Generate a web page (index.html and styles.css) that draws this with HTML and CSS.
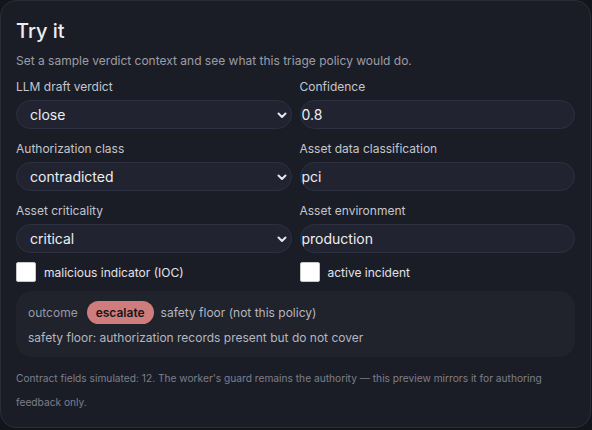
FILE: index.html
```html
<!DOCTYPE html>
<html lang="en">
<head>
    <meta charset="UTF-8">
    <meta name="viewport" content="width=device-width, initial-scale=1.0">
    <title>Try it</title>
    <link rel="stylesheet" href="styles.css">
</head>
<body>
    <section class="try-card">
        <h2>Try it</h2>
        <p class="intro">Set a sample verdict context and see what this triage policy would do.</p>

        <div class="fields">
            <div class="field">
                <label>LLM draft verdict</label>
                <div class="select-box">
                    <span>close</span>
                    <svg class="chevron" viewBox="0 0 12 12" width="12" height="12"><path d="M2.5 4.5 L6 8 L9.5 4.5" fill="none" stroke="#e6e7ec" stroke-width="2" stroke-linecap="round" stroke-linejoin="round"/></svg>
                </div>
            </div>
            <div class="field">
                <label>Confidence</label>
                <input class="text-input" type="text" value="0.8">
            </div>

            <div class="field">
                <label>Authorization class</label>
                <div class="select-box">
                    <span>contradicted</span>
                    <svg class="chevron" viewBox="0 0 12 12" width="12" height="12"><path d="M2.5 4.5 L6 8 L9.5 4.5" fill="none" stroke="#e6e7ec" stroke-width="2" stroke-linecap="round" stroke-linejoin="round"/></svg>
                </div>
            </div>
            <div class="field">
                <label>Asset data classification</label>
                <input class="text-input" type="text" value="pci">
            </div>

            <div class="field">
                <label>Asset criticality</label>
                <div class="select-box">
                    <span>critical</span>
                    <svg class="chevron" viewBox="0 0 12 12" width="12" height="12"><path d="M2.5 4.5 L6 8 L9.5 4.5" fill="none" stroke="#e6e7ec" stroke-width="2" stroke-linecap="round" stroke-linejoin="round"/></svg>
                </div>
            </div>
            <div class="field">
                <label>Asset environment</label>
                <input class="text-input" type="text" value="production">
            </div>

            <label class="check"><input type="checkbox"> malicious indicator (IOC)</label>
            <label class="check"><input type="checkbox"> active incident</label>
        </div>

        <div class="outcome">
            <div class="outcome-line">
                <span class="outcome-label">outcome</span>
                <span class="badge">escalate</span>
                <span>safety floor (not this policy)</span>
            </div>
            <div class="outcome-line">safety floor: authorization records present but do not cover</div>
        </div>

        <p class="note">Contract fields simulated: 12. The worker's guard remains the authority — this preview mirrors it for authoring feedback only.</p>
    </section>
</body>
</html>
```

FILE: styles.css
```css
* {
    margin: 0;
    padding: 0;
    box-sizing: border-box;
    font-family: Inter, "Noto Sans", sans-serif;
}

body {
    background-color: #14151b;
    width: 592px;
    height: 430px;
    overflow: hidden;
}

.try-card {
    width: 591px;
    height: 428px;
    background-color: #1b1d26;
    border: 1px solid #2a2d38;
    border-radius: 16px;
    padding: 16px 15px 14px 15px;
}

.try-card h2 {
    font-size: 20px;
    font-weight: 500;
    line-height: 28px;
    color: #eceef2;
}

.intro {
    margin-top: 6px;
    font-size: 12px;
    line-height: 20px;
    color: #9b9da6;
}

.fields {
    margin-top: 7px;
    display: grid;
    grid-template-columns: 1fr 1fr;
    column-gap: 8px;
    row-gap: 11px;
}

.field {
    display: flex;
    flex-direction: column;
    gap: 4px;
}

.field label {
    font-size: 12px;
    line-height: 18px;
    color: #c4c6cd;
}

.select-box,
.text-input {
    height: 29px;
    border-radius: 15px;
    background-color: #212430;
    border: 1px solid #2c3040;
    color: #eceef2;
    font-size: 14px;
}

.select-box {
    display: flex;
    align-items: center;
    justify-content: space-between;
    padding: 0 3px 0 13px;
}

.text-input {
    padding: 0 1px;
    outline: none;
    width: 100%;
}

.check {
    display: flex;
    align-items: center;
    gap: 8px;
    margin-top: -2px;
    font-size: 12px;
    color: #e2e3e8;
}

.check input {
    appearance: none;
    width: 20px;
    height: 20px;
    background-color: #ffffff;
    border-radius: 2px;
    border: 1px solid #c8c8c8;
}

.outcome {
    margin-top: 9px;
    background-color: #20222c;
    border-radius: 16px;
    padding: 10px 12px 9px;
    display: flex;
    flex-direction: column;
    gap: 2px;
}

.outcome-line {
    display: flex;
    align-items: center;
    gap: 7px;
    min-height: 22px;
    font-size: 12px;
    color: #b5b7bf;
}

.outcome-label {
    color: #979aa3;
    margin-right: 2px;
}

.badge {
    background-color: #cf7c7c;
    color: #16161a;
    font-weight: 600;
    font-size: 12px;
    line-height: 23px;
    padding: 0 9px;
    border-radius: 12px;
}

.note {
    margin-top: 9px;
    font-size: 10.2px;
    line-height: 24px;
    color: #7c7f8c;
}
```
